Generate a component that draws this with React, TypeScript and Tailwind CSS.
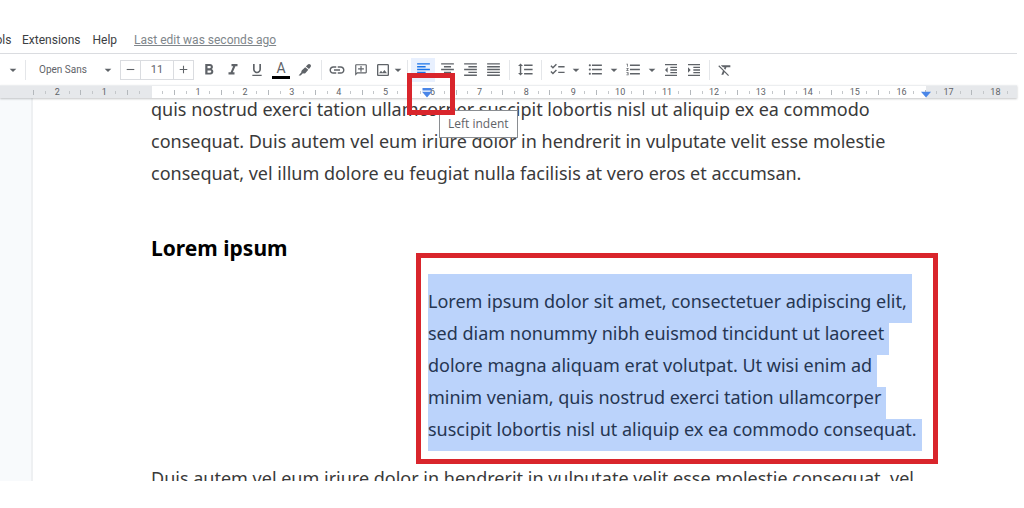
import React from "react";
import {
  MdAdd,
  MdArrowDropDown,
  MdChecklist,
  MdFormatAlignCenter,
  MdFormatAlignJustify,
  MdFormatAlignLeft,
  MdFormatAlignRight,
  MdFormatBold,
  MdFormatClear,
  MdFormatIndentDecrease,
  MdFormatIndentIncrease,
  MdFormatItalic,
  MdFormatLineSpacing,
  MdFormatListBulleted,
  MdFormatListNumbered,
  MdFormatUnderlined,
  MdInsertLink,
  MdOutlineAddComment,
  MdOutlineImage,
  MdRemove,
} from "react-icons/md";

interface ToolButtonProps {
  label: string;
  className?: string;
  children: React.ReactNode;
}

const ToolButton: React.FC<ToolButtonProps> = ({
  label,
  className = "w-6",
  children,
}) => (
  <button
    aria-label={label}
    className={`flex h-6 shrink-0 items-center justify-center ${className}`}
  >
    {children}
  </button>
);

// Icon with a drop-down arrow at its right
const MenuButton: React.FC<ToolButtonProps> = ({ label, children }) => (
  <button aria-label={label} className="flex h-6 shrink-0 items-center">
    <span className="flex w-6 justify-center">{children}</span>
    <span className="flex w-[14px] justify-center">
      <MdArrowDropDown size={16} className="shrink-0" />
    </span>
  </button>
);

const Divider = () => (
  <span className="flex w-2 shrink-0 justify-center">
    <span className="h-5 w-px bg-[#e4e6e9]" />
  </span>
);

const MenuBar = () => (
  <nav className="mt-[27px] flex h-[26px] items-center overflow-hidden text-[12px] text-[#3c4043]">
    <button className="-ml-[18px] w-7 shrink-0 text-right">Tools</button>
    <button className="ml-3">Extensions</button>
    <button className="ml-3">Help</button>
    <a href="#history" className="ml-[17px] text-[#80868b] underline">
      Last edit was seconds ago
    </a>
  </nav>
);

const HighlighterIcon = () => (
  <svg width="14" height="14" viewBox="0 0 14 14" fill="currentColor">
    <path d="M9.3 2.1Q10.9.3 12.4 1.6T12.2 4.6L11 6 7.9 3.5Z" />
    <path d="M7.2 4.2 10.3 6.8 7.3 10.2Q5.8 10.6 4.9 10.3L2.6 12.4H.6L3.4 9.2Q3 7.9 4.2 6.9Z" />
  </svg>
);

const Toolbar = () => (
  <div className="mr-[7px] flex h-8 items-center overflow-hidden border-t border-[#dadce0] text-[#5f6368]">
    <button aria-label="Styles" className="flex w-[21px] shrink-0 justify-end">
      <MdArrowDropDown size={16} />
    </button>
    <Divider />
    <div className="grid shrink-0 items-center">
      <select
        aria-label="Font"
        className="col-start-1 row-start-1 h-6 w-[87px] appearance-none pl-[10px] text-[10px]"
      >
        <option>Open Sans</option>
      </select>
      <MdArrowDropDown
        size={16}
        className="pointer-events-none col-start-1 row-start-1 justify-self-end"
      />
    </div>
    <div className="mr-[3px] ml-1 flex h-5 shrink-0 border border-[#dadce0]">
      <button
        aria-label="Decrease font size"
        className="flex w-[19px] items-center justify-center"
      >
        <MdRemove size={13} />
      </button>
      <input
        aria-label="Font size"
        defaultValue="11"
        className="w-[34px] border-x border-[#dadce0] pt-px text-center text-[11px]"
      />
      <button
        aria-label="Increase font size"
        className="flex w-[19px] items-center justify-center"
      >
        <MdAdd size={13} />
      </button>
    </div>
    <ToolButton label="Bold">
      <MdFormatBold size={18} />
    </ToolButton>
    <ToolButton label="Italic">
      <MdFormatItalic size={18} />
    </ToolButton>
    <ToolButton label="Underline">
      <MdFormatUnderlined size={16} />
    </ToolButton>
    <ToolButton label="Text color">
      <span className="w-[18px] border-b-3 border-black text-[14px] leading-4">
        A
      </span>
    </ToolButton>
    <ToolButton label="Highlight color">
      <HighlighterIcon />
    </ToolButton>
    <Divider />
    <ToolButton label="Insert link">
      <MdInsertLink size={18} />
    </ToolButton>
    <ToolButton label="Add comment">
      <MdOutlineAddComment size={14} className="-scale-x-100" />
    </ToolButton>
    <button aria-label="Insert image" className="flex h-6 shrink-0 items-center">
      <span className="flex w-5 justify-center">
        <MdOutlineImage size={16} />
      </span>
      <span className="flex w-[10px] justify-center">
        <MdArrowDropDown size={16} className="shrink-0" />
      </span>
    </button>
    <Divider />
    <ToolButton label="Left align" className="w-6 bg-[#e8f0fe] text-[#1a73e8]">
      <MdFormatAlignLeft size={17} />
    </ToolButton>
    <ToolButton label="Center align">
      <MdFormatAlignCenter size={17} />
    </ToolButton>
    <ToolButton label="Right align" className="w-[22px]">
      <MdFormatAlignRight size={17} />
    </ToolButton>
    <ToolButton label="Justify">
      <MdFormatAlignJustify size={17} />
    </ToolButton>
    <Divider />
    <ToolButton label="Line spacing">
      <MdFormatLineSpacing size={17} />
    </ToolButton>
    <Divider />
    <MenuButton label="Checklist">
      <MdChecklist size={17} />
    </MenuButton>
    <MenuButton label="Bulleted list">
      <MdFormatListBulleted size={17} />
    </MenuButton>
    <MenuButton label="Numbered list">
      <MdFormatListNumbered size={17} />
    </MenuButton>
    <ToolButton label="Decrease indent">
      <MdFormatIndentDecrease size={16} />
    </ToolButton>
    <ToolButton label="Increase indent" className="w-[22px]">
      <MdFormatIndentIncrease size={16} />
    </ToolButton>
    <Divider />
    <ToolButton label="Clear formatting">
      <MdFormatClear size={16} />
    </ToolButton>
  </div>
);

const marks = Array.from({ length: 21 }, (_, i) => i - 2);

const Ruler = () => (
  <div className="relative z-10 mr-[7px] border-t border-[#eceef0] bg-[linear-gradient(to_right,#e6e8eb_152px,#fff_152px,#fff_926px,#e6e8eb_926px)] shadow-[0_1px_2px_rgba(60,64,67,0.3)]">
    <div className="mr-1 ml-7 grid h-3 grid-cols-21 text-[9px] leading-3 text-[#5f6368]">
      {marks.map((mark) => (
        <div key={mark} className="grid grid-cols-4 items-center justify-items-center">
          <span className="h-[5px] w-px bg-[#b4b8bc]" />
          <span className="h-[3px] w-px bg-[#c4c7ca]" />
          <span>{mark === 0 ? "" : Math.abs(mark)}</span>
          <span className="h-[3px] w-px bg-[#c4c7ca]" />
        </div>
      ))}
    </div>
    {/* Indent handles */}
    <svg
      className="absolute top-[2px] left-[421px]"
      width="12"
      height="10"
      viewBox="0 0 12 10"
      fill="#4a86e8"
    >
      <path d="M1.5 0h9v2.5h-9zM1 3.8h10L6 9.5z" />
    </svg>
    <svg
      className="absolute top-[4px] left-[920px]"
      width="12"
      height="8"
      viewBox="0 0 12 8"
      fill="#4a86e8"
    >
      <path d="M1 1.8h10L6 7.5z" />
    </svg>
    {/* Hover hint of the left handle */}
    <div className="absolute top-6 left-[439px] border border-[#8a8d91] bg-white px-2 py-[3px] font-['Open_Sans',sans-serif] text-[12px] leading-5 whitespace-nowrap text-[#5f6368]">
      Left indent
    </div>
    <div className="absolute -top-[13px] left-[407px] h-[42px] w-12 border-5 border-[#d9252c]" />
  </div>
);

const selectedLines = [
  "Lorem ipsum dolor sit amet, consectetuer adipiscing elit,",
  "sed diam nonummy nibh euismod tincidunt ut laoreet",
  "dolore magna aliquam erat volutpat. Ut wisi enim ad",
  "minim veniam, quis nostrud exerci tation ullamcorper",
  "suscipit lobortis nisl ut aliquip ex ea commodo consequat.",
];

const Document = () => (
  <main className="flex h-[383px] overflow-hidden bg-[#f8fafc]">
    <div className="w-[33px] shrink-0 border-r-2 border-[#eef0f2]" />
    <article className="grow bg-white pl-[118px] font-['Noto_Sans',sans-serif] text-[18px] leading-8 whitespace-nowrap text-[#3a3a3a]">
      <p className="-mt-[5px]">
        quis nostrud exerci tation ullamcorper suscipit lobortis nisl ut aliquip ex ea commodo
        <br />
        consequat. Duis autem vel eum iriure dolor in hendrerit in vulputate velit esse molestie
        <br />
        consequat, vel illum dolore eu feugiat nulla facilisis at vero eros et accumsan.
      </p>
      <h2 className="mt-[43px] text-[21px] font-bold text-black">Lorem ipsum</h2>
      <div className="relative mt-[10px] ml-[277px]">
        <p className="leading-5 text-[#263652]">
          {selectedLines.map((line) => (
            <span
              key={line}
              className="block w-fit bg-[#bbd3fb] pr-[5px] pb-3 first:pt-[17px]"
            >
              {line}
            </span>
          ))}
        </p>
        <div className="absolute -top-[21px] -left-3 h-[211px] w-[522px] border-5 border-[#d9252c]" />
      </div>
      <p className="mt-[11px]">
        Duis autem vel eum iriure dolor in hendrerit in vulputate velit esse molestie consequat, vel
      </p>
    </article>
  </main>
);

export default function App() {
  return (
    <div className="min-h-screen overflow-hidden bg-white font-[Roboto,sans-serif]">
      <MenuBar />
      <Toolbar />
      <Ruler />
      <Document />
    </div>
  );
}
